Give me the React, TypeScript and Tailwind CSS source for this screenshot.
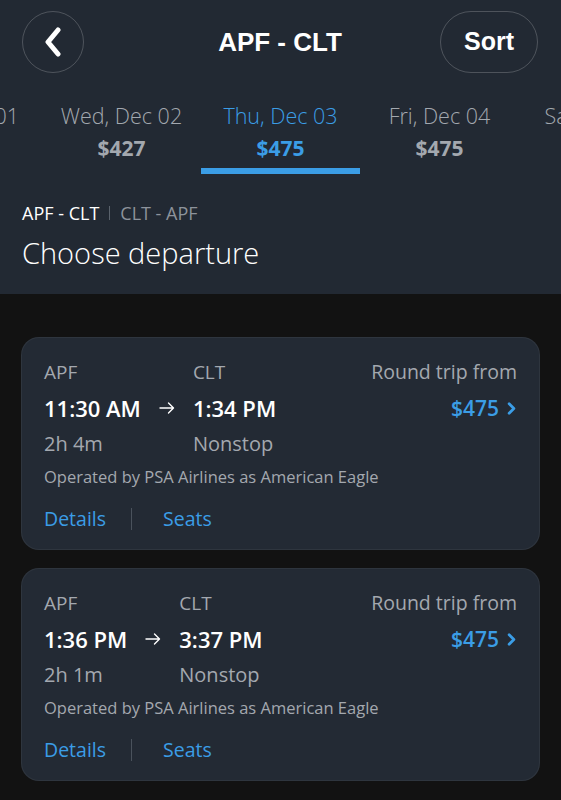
import { ChevronRight } from 'lucide-react';

type Day = { label: string; price: string };

const days: Day[] = [
  { label: 'Tue, Dec 01', price: '$427' },
  { label: 'Wed, Dec 02', price: '$427' },
  { label: 'Thu, Dec 03', price: '$475' },
  { label: 'Fri, Dec 04', price: '$475' },
  { label: 'Sat, Dec 05', price: '$475' },
];

type Flight = { dep: string; arr: string; duration: string };

const flights: Flight[] = [
  { dep: '11:30 AM', arr: '1:34 PM', duration: '2h 4m' },
  { dep: '1:36 PM', arr: '3:37 PM', duration: '2h 1m' },
];

function Arrow() {
  return (
    <svg width="16" height="12" viewBox="0 0 16 12" fill="none">
      <path d="M1 6 H14.5 M9.5 1 L14.5 6 L9.5 11" stroke="white" strokeWidth="1.4" strokeLinecap="round" strokeLinejoin="round" />
    </svg>
  );
}

function FlightCard({ f }: { f: Flight }) {
  return (
    <div className="rounded-[18px] border border-white/5 bg-[#232a34] px-[22px] pt-[16px] pb-[15px]">
      <div className="flex">
        <div className="grid grid-cols-[auto_16px_auto] gap-x-[18px]">
          <div className="text-[19px] leading-[36px] text-[#a3a8af]">APF</div>
          <div />
          <div className="text-[19px] leading-[36px] text-[#a3a8af]">CLT</div>
          <div className="text-[22px] font-semibold leading-[36px] text-white">{f.dep}</div>
          <div className="flex items-center justify-center">
            <Arrow />
          </div>
          <div className="text-[22px] font-semibold leading-[36px] text-white">{f.arr}</div>
          <div className="text-[20px] leading-[36px] text-[#a3a8af]">{f.duration}</div>
          <div />
          <div className="text-[20px] leading-[36px] text-[#a3a8af]">Nonstop</div>
        </div>
        <div className="ml-auto flex flex-col items-end">
          <div className="text-[19.5px] leading-[36px] text-[#a3a8af]">Round trip from</div>
          <div className="flex items-center gap-[3px] text-[21px] font-semibold leading-[36px] text-[#3b9de6]">
            $475
            <ChevronRight size={19} strokeWidth={3.5} className="-mr-[4px]" />
          </div>
        </div>
      </div>
      <div className="text-[16.5px] leading-[30px] text-[#a3a8af]">Operated by PSA Airlines as American Eagle</div>
      <div className="mt-[12px] flex items-center text-[19.5px] leading-[30px] text-[#3b9de6]">
        <span>Details</span>
        <span className="ml-[25px] mr-[31px] h-[22px] w-px bg-[#4a525c]" />
        <span>Seats</span>
      </div>
    </div>
  );
}

export default function App() {
  return (
    <div className="min-h-[800px] bg-[#121212] font-['Open_Sans',sans-serif]">
      <div className="bg-[#222933]">
        <div className="grid h-[84px] grid-cols-[1fr_auto_1fr] items-center px-[22px] pr-[23px]">
          <div>
            <button className="flex h-[62px] w-[62px] items-center justify-center rounded-full border border-white/20 text-white">
              <svg width="18" height="30" viewBox="0 0 18 30" fill="none">
                <path d="M14 3 L4 15 L14 27" stroke="white" strokeWidth="5" strokeLinecap="round" strokeLinejoin="round" />
              </svg>
            </button>
          </div>
          <div className="font-['Liberation_Sans',sans-serif] text-[26px] font-bold text-white">APF - CLT</div>
          <div className="flex justify-end">
            <button className="h-[62px] w-[98px] rounded-full border border-white/20 font-['Liberation_Sans',sans-serif] text-[25px] font-bold text-white">
              Sort
            </button>
          </div>
        </div>

        <div className="flex h-[90px] justify-center overflow-hidden">
          {days.map((d, i) => {
            const active = i === 2;
            return (
              <div key={d.label} className="flex w-[159px] shrink-0 flex-col items-center pt-[18px]">
                <div className={`whitespace-nowrap text-[21.5px] font-light leading-[28px] ${active ? 'text-[#3b9de6]' : 'text-[#a3a8af]'}`}>{d.label}</div>
                <div className={`mt-[4px] text-[21px] font-bold leading-[28px] ${active ? 'text-[#3b9de6]' : 'text-[#a3a8af]'}`}>{d.price}</div>
                {active ? <div className="mt-[6px] h-[6px] w-full bg-[#3b9de6]" /> : null}
              </div>
            );
          })}
        </div>

        <div className="px-[22px] pt-[26px] pb-[20px]">
          <div className="flex items-center text-[18px] leading-[26px]">
            <span className="text-white">APF - CLT</span>
            <span className="mx-[10px] h-[14px] w-px bg-[#5a626c]" />
            <span className="text-[#8d939b]">CLT - APF</span>
          </div>
          <div className="mt-[6px] text-[29px] font-light leading-[42px] text-white">Choose departure</div>
        </div>
      </div>

      <div className="flex flex-col gap-[18px] px-[21px] pt-[43px] pb-[20px]">
        {flights.map((f) => (
          <FlightCard key={f.dep} f={f} />
        ))}
      </div>
    </div>
  );
}
